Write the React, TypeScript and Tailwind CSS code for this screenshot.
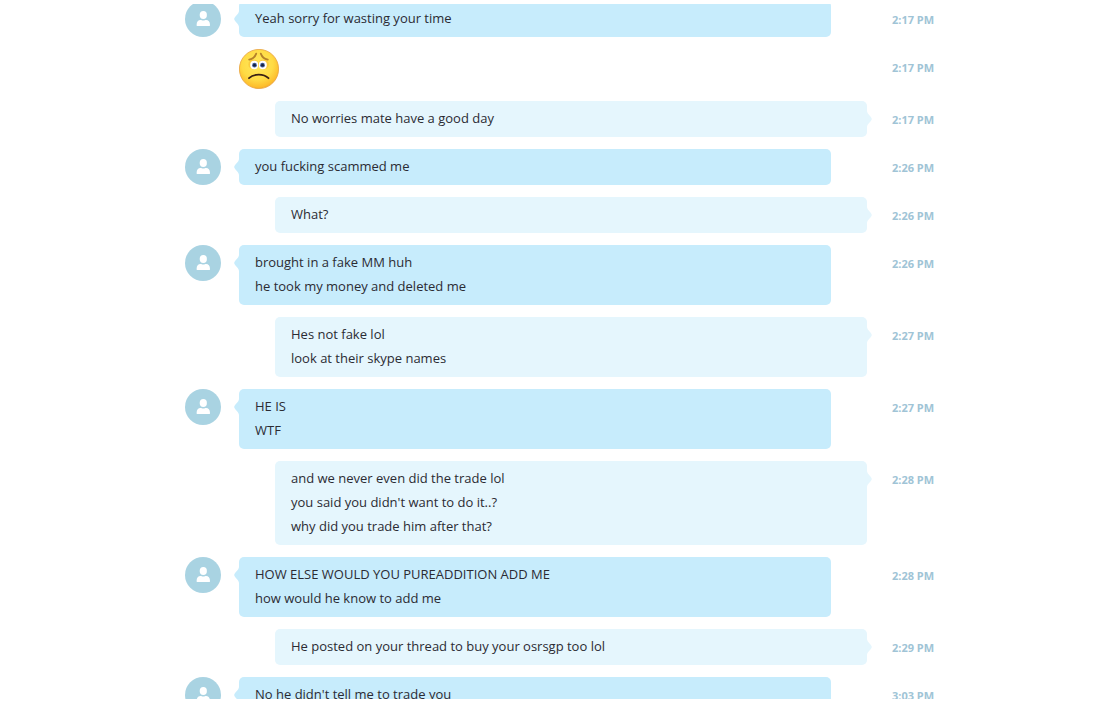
import { useEffect } from 'react';
import clsx from 'clsx';

type Message = {
  from: 'them' | 'me';
  lines?: string[];
  emoticon?: boolean;
  time: string;
};

const messages: Message[] = [
  { from: 'them', lines: ['Yeah sorry for wasting your time'], time: '2:17 PM' },
  { from: 'them', emoticon: true, time: '2:17 PM' },
  { from: 'me', lines: ['No worries mate have a good day'], time: '2:17 PM' },
  { from: 'them', lines: ['you fucking scammed me'], time: '2:26 PM' },
  { from: 'me', lines: ['What?'], time: '2:26 PM' },
  { from: 'them', lines: ['brought in a fake MM huh', 'he took my money and deleted me'], time: '2:26 PM' },
  { from: 'me', lines: ['Hes not fake lol', 'look at their skype names'], time: '2:27 PM' },
  { from: 'them', lines: ['HE IS', 'WTF'], time: '2:27 PM' },
  {
    from: 'me',
    lines: ['and we never even did the trade lol', "you said you didn't want to do it..?", 'why did you trade him after that?'],
    time: '2:28 PM',
  },
  { from: 'them', lines: ['HOW ELSE WOULD YOU PUREADDITION ADD ME', 'how would he know to add me'], time: '2:28 PM' },
  { from: 'me', lines: ['He posted on your thread to buy your osrsgp too lol'], time: '2:29 PM' },
  { from: 'them', lines: ["No he didn't tell me to trade you"], time: '3:03 PM' },
];

function Avatar() {
  return (
    <svg viewBox="0 0 36 36" className="size-9" aria-hidden="true">
      <circle cx="18" cy="18" r="18" fill="#a9d3e2" />
      <ellipse cx="18.3" cy="14.1" rx="3.6" ry="4" fill="#fff" />
      <path d="M11.6 23.9c0-3 1.6-4.900 3.900-4.900.9 0 1.600.6 2.800.6s1.900-.6 2.800-.6c2.300 0 3.900 1.900 3.900 4.900 0 .8-.4 1.200-1.100 1.200H12.700c-.7 0-1.100-.4-1.100-1.200z" fill="#fff" />
    </svg>
  );
}

function SadFace() {
  return (
    <svg viewBox="0 0 40 40" className="size-10" aria-hidden="true">
      <defs>
        <radialGradient id="face" cx="0.46" cy="0.38" r="0.66">
          <stop offset="0" stopColor="#ffe95c" />
          <stop offset="0.6" stopColor="#ffdb45" />
          <stop offset="0.88" stopColor="#fdbd2c" />
          <stop offset="1" stopColor="#f09a24" />
        </radialGradient>
      </defs>
      <circle cx="20" cy="20" r="19.6" fill="url(#face)" stroke="#e9a13b" strokeWidth="0.8" />
      <ellipse cx="14.6" cy="15.4" rx="5.2" ry="5" fill="#f8b62b" opacity="0.5" />
      <ellipse cx="24.6" cy="15.4" rx="5.2" ry="5" fill="#f8b62b" opacity="0.5" />
      <ellipse cx="15.2" cy="16" rx="4" ry="4.2" fill="#fff" />
      <ellipse cx="23.8" cy="16" rx="4" ry="4.2" fill="#fff" />
      <circle cx="15.5" cy="16.2" r="2.4" fill="#425c9c" />
      <circle cx="23.5" cy="16.2" r="2.4" fill="#425c9c" />
      <circle cx="15.5" cy="16.2" r="1.4" fill="#17233f" />
      <circle cx="23.5" cy="16.2" r="1.4" fill="#17233f" />
      <path d="M10.2 10.600c3.400-.6 5.800-2.600 7-6M28.800 10.600c-3.400-.6-5.800-2.600-7-6" fill="none" stroke="#b5812a" strokeWidth="1.800" strokeLinecap="round" />
      <path d="M10 29.200c4.800-4.800 14.700-4.800 19.500 0" fill="none" stroke="#3a2014" strokeWidth="1.800" strokeLinecap="round" />
    </svg>
  );
}

function Bubble({ mine, lines }: { mine: boolean; lines: string[] }) {
  return (
    <div
      className={clsx(
        'relative flex-1 rounded-[5px] px-4 pt-[5px] pb-[7px] text-[13px] leading-6 text-[#2b2b33]',
        mine ? 'ml-9 bg-[#e5f6fd]' : 'mr-9 bg-[#c7ecfc]'
      )}
    >
      <svg
        viewBox="0 0 6 16"
        className={clsx('absolute top-2.5 h-4 w-1.5', mine ? '-right-[5px] -scale-x-100' : '-left-[5px]')}
        aria-hidden="true"
      >
        <path d="M6 0H5C5 3 .2 5.800.2 8S5 13 5 16h1z" fill={mine ? '#e5f6fd' : '#c7ecfc'} />
      </svg>
      {lines.map((line) => (
        <p key={line}>{line}</p>
      ))}
    </div>
  );
}

function MessageRow({ message }: { message: Message }) {
  const mine = message.from === 'me';
  return (
    <li className="flex items-start">
      <div className="mr-[18px] w-9 shrink-0">{!mine && message.lines && <Avatar />}</div>
      {message.lines ? (
        <Bubble mine={mine} lines={message.lines} />
      ) : (
        <div className="flex-1">
          <SadFace />
        </div>
      )}
      <time className="ml-[25px] w-[42px] shrink-0 pt-[7px] text-[11px] leading-6 font-bold whitespace-nowrap text-[#a0c4d6]">
        {message.time}
      </time>
    </li>
  );
}

function App() {
  useEffect(() => {
    document.title = 'Conversation';
  }, []);

  return (
    <main className="flex h-screen flex-col bg-white pt-1 pb-1.5 pl-[21px] font-['Open_Sans','Noto_Sans',sans-serif]">
      <div className="min-h-0 flex-1 overflow-hidden">
        {/* The conversation is scrolled part way into its first message */}
        <ul className="mx-auto -mt-[3px] flex max-w-[749px] flex-col gap-3">
          {messages.map((message, i) => (
            <MessageRow key={i} message={message} />
          ))}
        </ul>
      </div>
    </main>
  );
}

export default App;
